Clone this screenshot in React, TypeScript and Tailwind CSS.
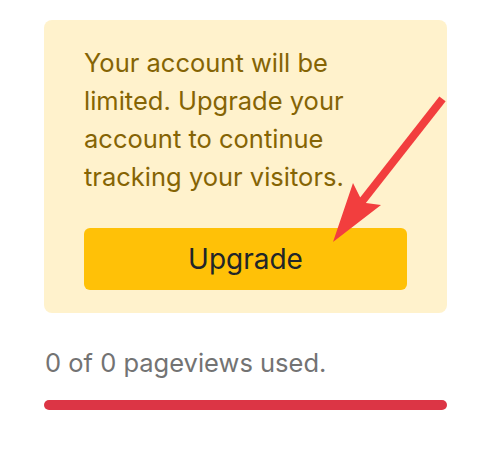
import React from 'react';

const Arrow: React.FC = () => (
  <svg className="absolute left-0 top-0 pointer-events-none" width="491" height="451" viewBox="0 0 491 451">
    <line x1="440" y1="102" x2="364" y2="199" stroke="#f23e3e" strokeWidth="8" strokeLinecap="square" />
    <polygon points="333,242 353,183 360,197 366,203 381,205" fill="#f23e3e" />
  </svg>
);

const App: React.FC = () => {
  return (
    <div className="relative w-[491px] h-[451px] bg-white overflow-hidden" style={{ fontFamily: 'Inter, "Liberation Sans", sans-serif' }}>
      <div className="px-[44px] pt-[20px]">
        <div className="bg-[#fff2cc] rounded-lg px-10 pt-6 pb-[23px]">
          <p className="text-[#856404] text-[25.5px] leading-[38px]">
            Your account will be limited. Upgrade your account to continue tracking your visitors.
          </p>
          <button
            type="button"
            className="mt-8 w-full h-[62px] rounded-md bg-[#ffc107] text-[#212529] text-[28px]"
          >
            Upgrade
          </button>
        </div>
        <p className="mt-[31px] text-[#737373] text-[25.5px] leading-[38px] pl-px">0 of 0 pageviews used.</p>
        <div className="mt-[18px] h-[10px] w-full rounded-full bg-[#dc3545]" />
      </div>
      <Arrow />
    </div>
  );
};

export default App;
